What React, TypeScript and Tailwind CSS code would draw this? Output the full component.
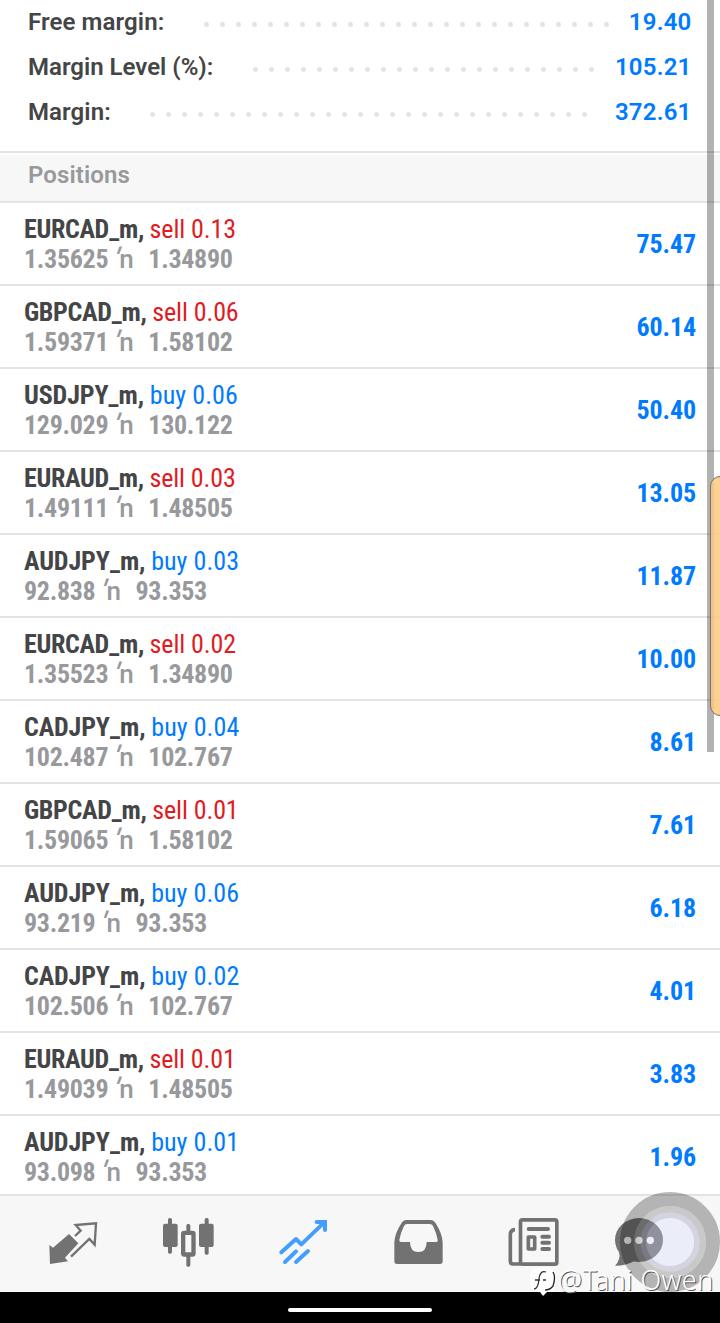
import clsx from 'clsx'

interface Position {
  symbol: string
  side: 'buy' | 'sell'
  volume: string
  open: string
  current: string
  profit: string
}

const summary = [
  { label: 'Free margin:', value: '19.40', labelClass: 'w-[171px] tracking-[0.1px]', dotsClass: 'w-[416px]' },
  { label: 'Margin Level (%):', value: '105.21', labelClass: 'w-[220px]', dotsClass: 'w-[352px]' },
  { label: 'Margin:', value: '372.61', labelClass: 'w-[117px] tracking-[0.1px]', dotsClass: 'w-[448px]' },
]

const positions: Position[] = [
  { symbol: 'EURCAD_m', side: 'sell', volume: '0.13', open: '1.35625', current: '1.34890', profit: '75.47' },
  { symbol: 'GBPCAD_m', side: 'sell', volume: '0.06', open: '1.59371', current: '1.58102', profit: '60.14' },
  { symbol: 'USDJPY_m', side: 'buy', volume: '0.06', open: '129.029', current: '130.122', profit: '50.40' },
  { symbol: 'EURAUD_m', side: 'sell', volume: '0.03', open: '1.49111', current: '1.48505', profit: '13.05' },
  { symbol: 'AUDJPY_m', side: 'buy', volume: '0.03', open: '92.838', current: '93.353', profit: '11.87' },
  { symbol: 'EURCAD_m', side: 'sell', volume: '0.02', open: '1.35523', current: '1.34890', profit: '10.00' },
  { symbol: 'CADJPY_m', side: 'buy', volume: '0.04', open: '102.487', current: '102.767', profit: '8.61' },
  { symbol: 'GBPCAD_m', side: 'sell', volume: '0.01', open: '1.59065', current: '1.58102', profit: '7.61' },
  { symbol: 'AUDJPY_m', side: 'buy', volume: '0.06', open: '93.219', current: '93.353', profit: '6.18' },
  { symbol: 'CADJPY_m', side: 'buy', volume: '0.02', open: '102.506', current: '102.767', profit: '4.01' },
  { symbol: 'EURAUD_m', side: 'sell', volume: '0.01', open: '1.49039', current: '1.48505', profit: '3.83' },
  { symbol: 'AUDJPY_m', side: 'buy', volume: '0.01', open: '93.098', current: '93.353', profit: '1.96' },
]

function PositionRow({ position }: { position: Position }) {
  const isSell = position.side === 'sell'

  return (
    <div className="flex h-[83px] shrink-0 items-start justify-between border-b-2 border-[#e3e3e4] pl-6 pr-[24px] pt-[11px] font-['Roboto_Condensed',sans-serif] text-[26px] leading-[30px]">
      <div>
        <div className={clsx('whitespace-pre font-bold text-[#444546]', isSell ? 'tracking-[-0.35px]' : 'tracking-[-0.14px]')}>
          {position.symbol},{' '}
          <span className={clsx('font-normal', isSell ? 'tracking-[-0.1px] text-[#e01b22]' : 'tracking-[0.05px] text-[#007bff]')}>
            {position.side} {position.volume}
          </span>
        </div>
        <div className="flex font-bold tracking-[-0.3px] text-[#98999c]">
          <span>{position.open}</span>
          <span className="ml-[6px] w-[5px] -skew-x-[18deg] text-[30px] font-medium">′</span>
          <span className="mr-[16px] w-[13px] font-['Roboto',sans-serif] font-medium">n</span>
          <span>{position.current}</span>
        </div>
      </div>
      <span className="mt-[15px] font-bold tracking-[-0.1px] text-[#007bff]">{position.profit}</span>
    </div>
  )
}

function QuotesIcon() {
  return (
    <svg width="70" height="64" viewBox="0 0 210 192" className="shrink-0">
      <path d="M28 105L39 113L87 72L115 100L75 143L84 154L30 162Z" fill="#727272" />
      <path d="M105 78L122 62L107 45L168 40L164 104L148 87L93 140" fill="none" stroke="#727272" strokeWidth="7" />
    </svg>
  )
}

function ChartIcon() {
  return (
    <svg width="70" height="64" viewBox="0 0 210 192" className="shrink-0" fill="#727272">
      <rect x="39" y="24" width="12" height="107" rx="5" />
      <rect x="24" y="41" width="44" height="70" rx="6" />
      <rect x="94" y="42" width="12" height="32" rx="5" />
      <rect x="94" y="130" width="12" height="40" rx="5" />
      <rect x="84.5" y="68.500" width="31" height="65" rx="3" fill="none" stroke="#727272" strokeWidth="13" />
      <rect x="149" y="24" width="12" height="110" rx="5" />
      <rect x="132" y="41" width="44" height="70" rx="6" />
    </svg>
  )
}

function TradeIcon() {
  return (
    <svg
      width="70"
      height="64"
      viewBox="0 0 210 192"
      className="shrink-0"
      fill="none"
      stroke="#439eff"
      strokeWidth="12"
      strokeLinecap="round"
      strokeLinejoin="round"
    >
      <path d="M34 127L78 87L94 103L162 38" />
      <path d="M140 36H165V60" strokeLinejoin="miter" />
      <path d="M45 156L78 124M78 156L114 123" />
    </svg>
  )
}

function HistoryIcon() {
  return (
    <svg width="70" height="64" viewBox="0 0 210 192" className="shrink-0">
      <path
        d="M63 30H138Q146 30 151 38Q173 72 173 98V154Q173 162 165 162H36Q28 162 28 154V98Q28 72 50 38Q55 30 63 30ZM66 42H134Q141 42 144 48Q154 68 158 89Q159 96 152 96H125Q125 126 100 126Q75 126 75 96H48Q42 96 43 89Q47 68 57 48Q60 42 66 42Z"
        fill="#727272"
        fillRule="evenodd"
      />
    </svg>
  )
}

function NewsIcon() {
  return (
    <svg width="70" height="64" viewBox="0 0 210 192" className="shrink-0" fill="none" stroke="#727272" strokeWidth="11">
      <rect x="61.500" y="29.500" width="109" height="133" rx="6" />
      <path d="M45 59Q31 60 31 74V154Q31 162 39 162H62" />
      <path d="M86 57H144M127 80H147M127 98H147M127 117H147" strokeWidth="12" strokeLinecap="round" />
      <rect x="85" y="81" width="19" height="36" strokeLinejoin="round" />
    </svg>
  )
}

function ChatIcon() {
  return (
    <svg width="70" height="64" viewBox="0 0 210 192" className="shrink-0">
      <ellipse cx="72" cy="90" rx="72" ry="66" fill="#727272" />
      <path d="M12 125Q18 148 0 167Q30 168 60 152Z" fill="#727272" />
      <circle cx="38" cy="91" r="11" fill="#f7f7f7" />
      <circle cx="72" cy="91" r="11" fill="#f7f7f7" />
      <circle cx="106" cy="91" r="11" fill="#f7f7f7" />
    </svg>
  )
}

// Floating assistive button, four translucent rings
function TouchButton() {
  return (
    <svg width="100" height="100" viewBox="0 0 100 100" className="absolute left-[620px] top-[1192px]" fill="none">
      <circle cx="50" cy="50" r="43" stroke="#000" strokeOpacity="0.27" strokeWidth="14" />
      <circle cx="50" cy="50" r="32.750" stroke="#616161" strokeOpacity="0.3" strokeWidth="6.500" />
      <circle cx="50" cy="50" r="26.750" stroke="#8d8db0" strokeOpacity="0.32" strokeWidth="5.500" />
      <circle cx="50" cy="50" r="24" fill="#d3ddff" fillOpacity="0.31" />
    </svg>
  )
}

function Watermark() {
  return (
    <div className="absolute left-[529px] top-[1262px] flex items-center">
      <svg width="28" height="36" viewBox="0 0 28 36">
        <path d="M10 6H17Q26 6 26 15V22Q26 30 18 30L14 34L11 30Q1 30 1 21V15Q1 6 10 6Z" fill="#fff" />
        <path d="M17 10Q11 8 10 17Q9 27 5 27M6 18H11M14 18H17" fill="none" stroke="#333" strokeWidth="1.300" />
        <path d="M24 10Q27 15 24 24Q21 28 16 28" fill="none" stroke="#222" strokeWidth="1.300" />
      </svg>
      <span className="ml-px whitespace-nowrap font-['Noto_Sans',sans-serif] text-[27px] font-light leading-[36px] tracking-[0.4px] text-white [text-shadow:1px_1px_0_#555]">
        @Tani Owen
      </span>
    </div>
  )
}

export default function App() {
  return (
    <div className="relative flex h-[1323px] w-[720px] flex-col overflow-hidden bg-white font-['Roboto',sans-serif]">
      <div className="h-[151px] shrink-0">
        <div className="-mt-px pl-7 pr-[28.5px] text-2xl font-semibold">
          {summary.map((item) => (
            <div key={item.label} className="flex h-[45px] items-center">
              <span className={clsx('shrink-0 whitespace-nowrap text-[#444546]', item.labelClass)}>{item.label}</span>
              <span
                className={clsx(
                  'h-[45px] shrink-0 bg-[radial-gradient(circle_at_7.5px_25.5px,#e4e4e5_2px,transparent_2.9px)] bg-[length:16px_45px]',
                  item.dotsClass,
                )}
              />
              <span className="ml-auto tracking-[0.2px] text-[#007bff]">{item.value}</span>
            </div>
          ))}
        </div>
      </div>

      <div className="h-[52px] shrink-0 border-y-2 border-[#e3e3e4] pt-[2px]">
        <div className="h-full bg-[#f7f7f7] pl-7 text-2xl font-semibold leading-[40px] tracking-[0.1px] text-[#98999c]">Positions</div>
      </div>

      <div className="flex h-[991px] shrink-0 flex-col overflow-hidden">
        {positions.map((position, i) => (
          <PositionRow key={i} position={position} />
        ))}
      </div>

      <nav className="flex h-[98px] shrink-0 gap-[45px] border-t-2 border-[#e3e3e4] bg-[#f7f7f7] pl-10 pt-[14px]">
        <QuotesIcon />
        <ChartIcon />
        <TradeIcon />
        <HistoryIcon />
        <NewsIcon />
        <ChatIcon />
      </nav>

      <div className="flex h-[31px] shrink-0 justify-center bg-black pt-4">
        <div className="h-1 w-36 rounded-full bg-white" />
      </div>

      {/* scroll thumb and edge panel handle */}
      <div className="absolute right-[6.5px] top-0 h-[752px] w-[7px] bg-black/30" />
      <div className="absolute -right-px top-[476px] h-[240px] w-[11px] rounded-l-[10px] border border-[#77706a] bg-[#fdc880]/85" />
      <TouchButton />
      <Watermark />
    </div>
  )
}
